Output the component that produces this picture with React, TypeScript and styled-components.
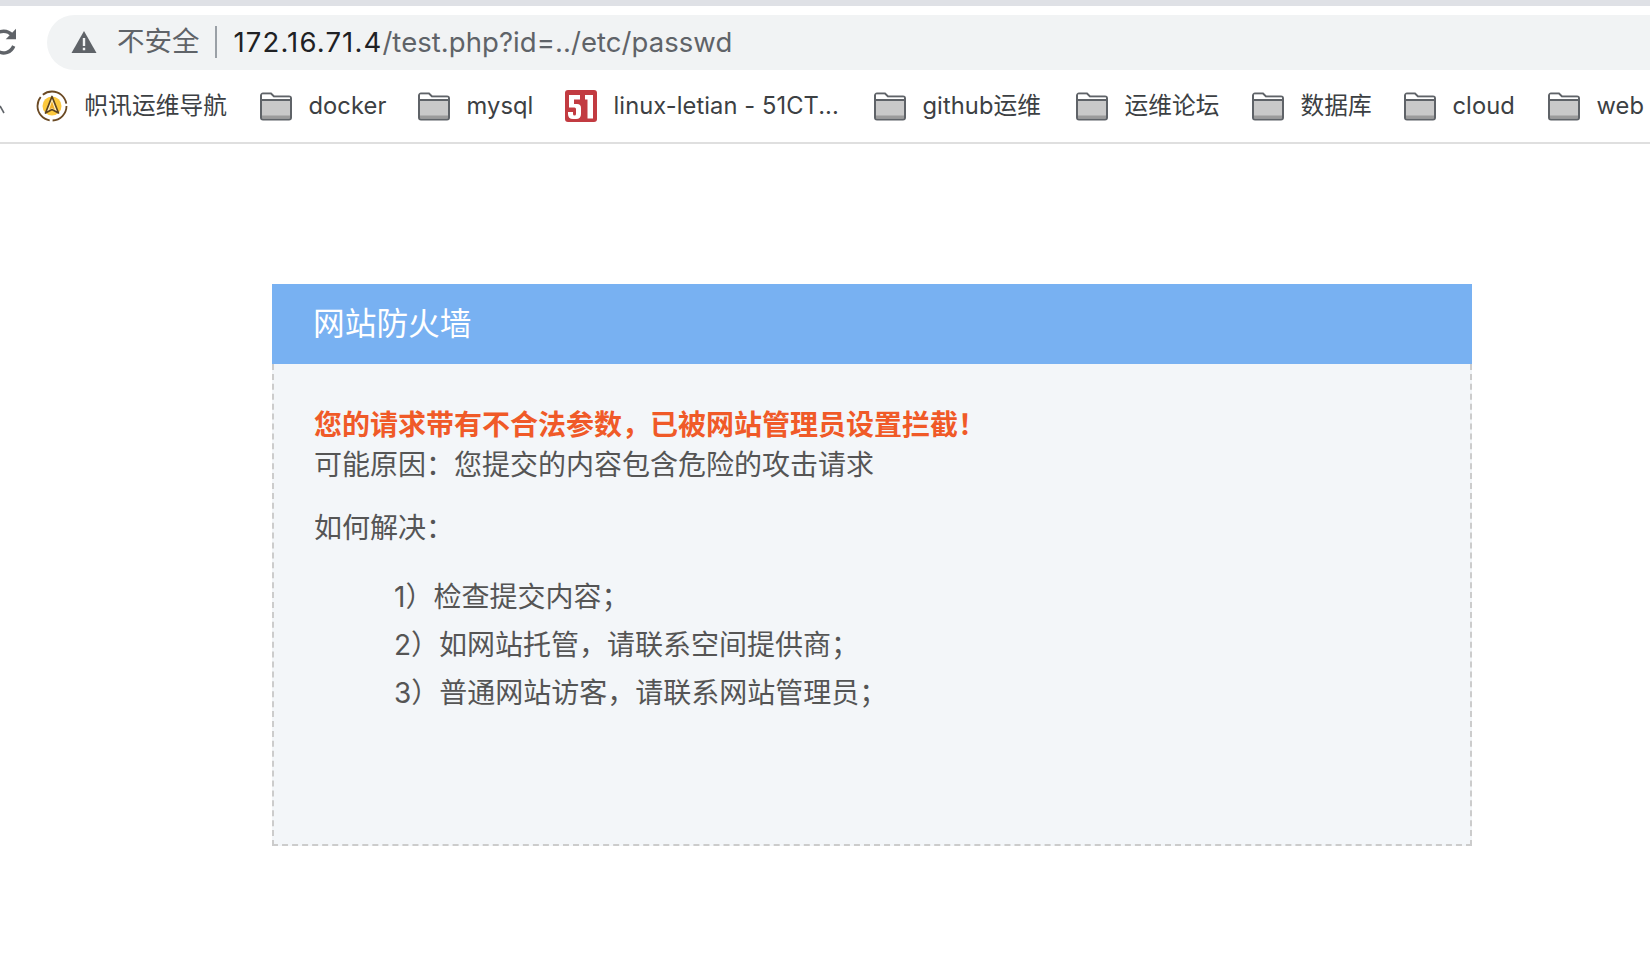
import React from 'react';
import styled, { createGlobalStyle } from 'styled-components';

const Global = createGlobalStyle`
  html, body { margin: 0; padding: 0; background: #fff; overflow: hidden; }
  body { font-family: Inter, "Noto Sans CJK SC", sans-serif; }
`;

const Page = styled.div`
  width: 1650px;
  height: 964px;
  overflow: hidden;
  background: #fff;
`;
const TabStrip = styled.div`
  height: 6px;
  background: #dfe1e6;
`;
const Toolbar = styled.div`
  height: 63px;
  display: flex;
  align-items: center;
  padding-top: 9px;
  box-sizing: border-box;
`;
const Reload = styled.svg`
  width: 32px;
  height: 32px;
  margin-left: -12px;
  margin-right: 27px;
  flex: none;
`;
const Omnibox = styled.div`
  flex: 1;
  height: 55px;
  margin-right: -40px;
  border-radius: 28px;
  background: #f1f3f4;
  display: flex;
  align-items: center;
  padding-left: 24px;
`;
const Warn = styled.svg`
  width: 26px;
  height: 24px;
  flex: none;
  margin-right: 20px;
`;
const Insecure = styled.span`
  font-size: 27.5px;
  color: #5f6368;
  line-height: 1;
`;
const Divider = styled.span`
  width: 2px;
  height: 32px;
  background: #9aa0a6;
  margin: 0 17px 0 15px;
`;
const Url = styled.span`
  font-size: 27.5px;
  color: #5f6368;
  white-space: nowrap;
  letter-spacing: 0.06px;
  & b { font-weight: 400; color: #202124; letter-spacing: 1.14px; }
`;
const Bookmarks = styled.div`
  height: 75px;
  border-bottom: 2px solid #dfdfdf;
  box-sizing: border-box;
  display: flex;
  align-items: center;
  padding-left: 36px;
  position: relative;
  white-space: nowrap;
`;
const Chevron = styled.svg`
  position: absolute;
  left: 0;
  top: 36px;
  width: 6px;
  height: 10px;
`;
const Mark = styled.div<{ $w: number }>`
  display: flex;
  align-items: center;
  flex: none;
  width: ${p => p.$w}px;
`;
const MarkIcon = styled.svg`
  width: 32px;
  height: 32px;
  flex: none;
  margin-right: 16.5px;
`;
const MarkLabel = styled.span`
  font-size: 23.7px;
  letter-spacing: 0.08px;
  color: #3c4043;
  line-height: 1;
`;
const Card = styled.section`
  width: 1200px;
  margin: 140px 0 0 272px;
`;
const CardHead = styled.h1`
  margin: 0;
  height: 80px;
  background: #78b1f2;
  color: #fff;
  font-size: 31.7px;
  font-weight: 400;
  line-height: 80px;
  padding-left: 41px;
`;
const CardBody = styled.div`
  height: 482px;
  box-sizing: border-box;
  background: #f3f6f9;
  border: 2px dashed #ccc;
  border-top: none;
  padding-top: 41px;
  padding-left: 40px;
  font-size: 28px;
  color: #555;
`;
const Alert = styled.div`
  color: #f05a28;
  font-weight: 700;
  line-height: 40px;
`;
const Line = styled.div`
  line-height: 40px;
`;
const HowTo = styled.div`
  line-height: 40px;
  margin-top: 23px;
`;
const Steps = styled.ul`
  list-style: none;
  margin: 25px 0 0;
  padding: 0 0 0 80px;
`;
const Step = styled.li`
  line-height: 48px;
`;

const Folder = () => (
  <MarkIcon viewBox="0 0 32 32">
    <path d="M1 5.500 a2 2 0 0 1 2-2 h8 l3 3 h15 a2 2 0 0 1 2 2 v19 a2 2 0 0 1-2 2 H3 a2 2 0 0 1-2-2 Z" fill="#c9c9c9" stroke="#5f6368" strokeWidth="2" />
    <path d="M2 4.500 h8.500 l3 3 h16.500 v2 H2 Z" fill="#fff" />
    <path d="M2 10 h28" stroke="#5f6368" strokeWidth="2" />
    <path d="M2 25.500 h28 v3 H2 Z" fill="#9b9b9b" />
  </MarkIcon>
);

const Compass = () => (
  <MarkIcon viewBox="0 0 32 32">
    <circle cx="16" cy="16" r="14.500" fill="none" stroke="#6b4a24" strokeWidth="1.800" strokeDasharray="22 3 30 3 30 3" />
    <circle cx="16" cy="16" r="9.500" fill="#fdc93e" />
    <path d="M16 6.500 L22.500 23 L16 19.500 L9.500 23 Z" fill="#fff3c8" stroke="#5c4320" strokeWidth="1.700" strokeLinejoin="round" />
    <path d="M16 11 L19 20 L16 18 L13 20 Z" fill="#f2b02c" />
  </MarkIcon>
);

const FiftyOne = () => (
  <MarkIcon viewBox="0 0 32 32">
    <rect x="0" y="0" width="32" height="32" rx="3" fill="#c23b41" />
    <path d="M4 5 h11 v4.500 h-6 v4.500 h3 q4 0 4 4 v6 q0 5-5 5 h-3 q-5 0-5-5 v-2 h5 v2 q0 1.500 1.500 1.500 q1.500 0 1.500-1.500 v-5 q0-1.500-1.500-1.500 H4 Z" fill="#fff" />
    <path d="M20 5 h8 v23.500 h-5.500 V9.500 h-2.500 Z" fill="#fff" />
  </MarkIcon>
);

const items: { w: number; label: string; kind?: 'compass' | 'cto' }[] = [
  { w: 224, label: '帜讯运维导航', kind: 'compass' },
  { w: 158, label: 'docker' },
  { w: 147, label: 'mysql' },
  { w: 309, label: 'linux-letian - 51CT...', kind: 'cto' },
  { w: 202, label: 'github运维' },
  { w: 176, label: '运维论坛' },
  { w: 152, label: '数据库' },
  { w: 144, label: 'cloud' },
  { w: 110, label: 'web' },
];

export default function App() {
  return (
    <Page>
      <Global />
      <TabStrip />
      <Toolbar>
        <Reload viewBox="0 0 28 28">
          <path d="M22.500 17.500 A9.500 9.500 0 1 1 21 8" fill="none" stroke="#5f6368" strokeWidth="3" />
          <path d="M24.500 2.500 V11.500 H15.500 Z" fill="#5f6368" />
        </Reload>
        <Omnibox>
          <Warn viewBox="0 0 26 24">
            <path d="M13 1 L25.500 23 H0.500 Z" fill="#5f6368" />
            <path d="M11.800 8 h2.400 v8 h-2.400 Z M11.800 17.800 h2.400 v2.400 h-2.400 Z" fill="#f1f3f4" />
          </Warn>
          <Insecure>不安全</Insecure>
          <Divider />
          <Url><b>172.16.71.4</b>/test.php?id=../etc/passwd</Url>
        </Omnibox>
      </Toolbar>
      <Bookmarks>
        <Chevron viewBox="0 0 6 10">
          <path d="M0 1 L4 8" stroke="#5f6368" strokeWidth="1.600" fill="none" />
        </Chevron>
        {items.map(it => (
          <Mark key={it.label} $w={it.w}>
            {it.kind === 'compass' ? <Compass /> : it.kind === 'cto' ? <FiftyOne /> : <Folder />}
            <MarkLabel>{it.label}</MarkLabel>
          </Mark>
        ))}
      </Bookmarks>
      <Card>
        <CardHead>网站防火墙</CardHead>
        <CardBody>
          <Alert>您的请求带有不合法参数，已被网站管理员设置拦截！</Alert>
          <Line>可能原因：您提交的内容包含危险的攻击请求</Line>
          <HowTo>如何解决：</HowTo>
          <Steps>
            <Step>1）检查提交内容；</Step>
            <Step>2）如网站托管，请联系空间提供商；</Step>
            <Step>3）普通网站访客，请联系网站管理员；</Step>
          </Steps>
        </CardBody>
      </Card>
    </Page>
  );
}
